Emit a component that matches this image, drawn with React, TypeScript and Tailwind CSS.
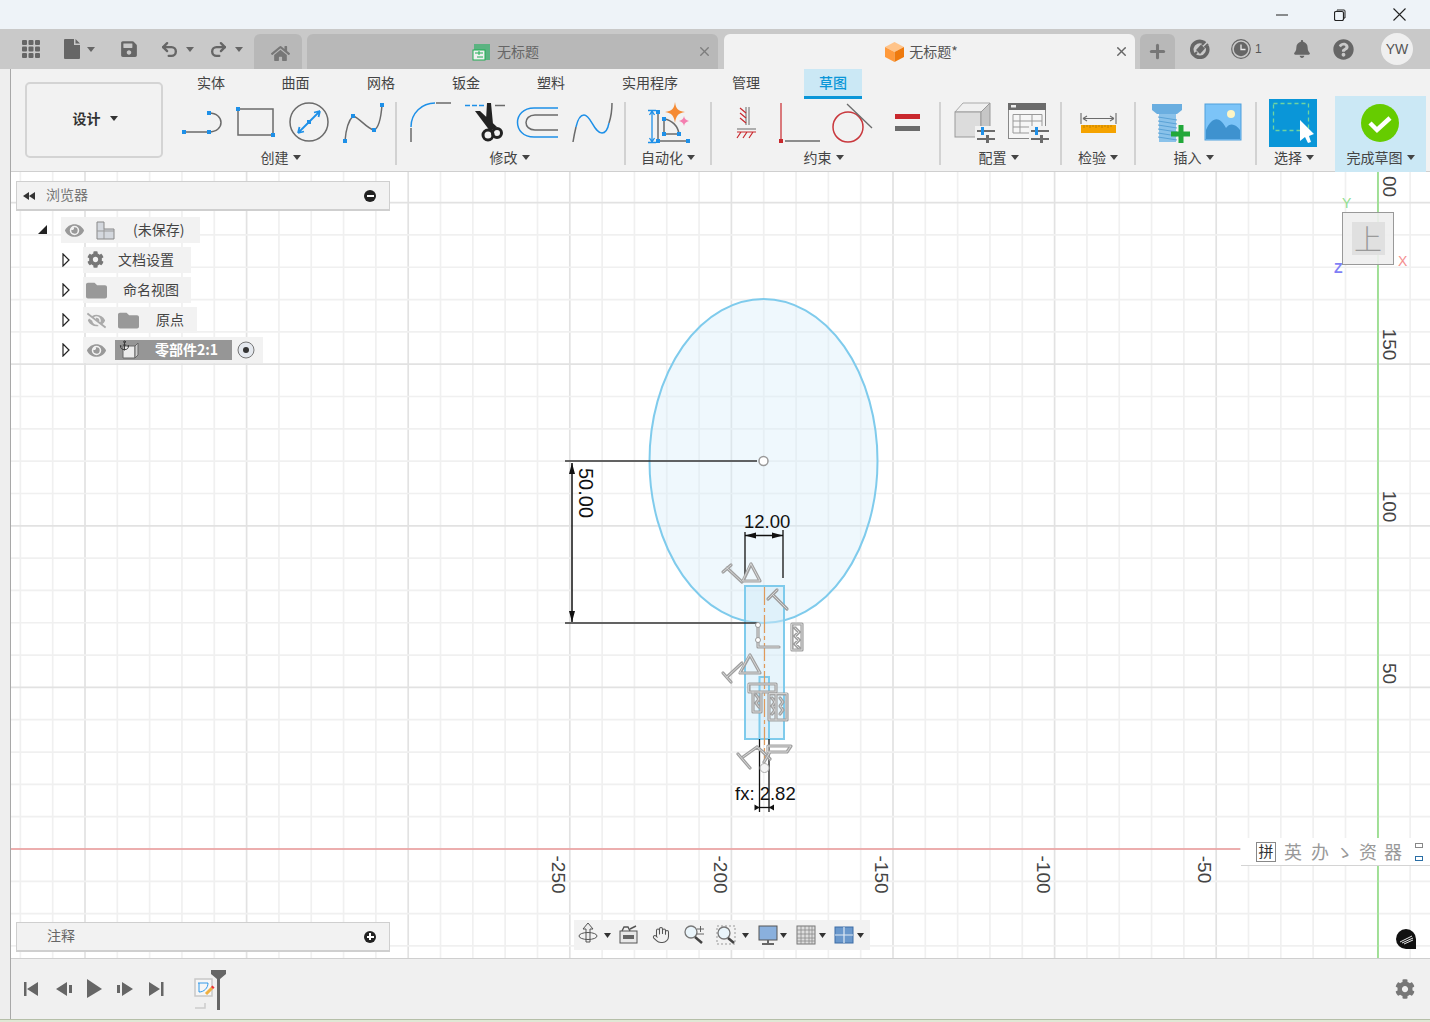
import React from "react";
import { FaHome, FaCog, FaBell, FaQuestionCircle, FaEye, FaEyeSlash, FaFolder, FaSave } from "react-icons/fa";
import { Undo2, Redo2, Plus, X, Hand, Anchor } from "lucide-react";

const BLUE = "#1e90e8";
const GR = "#6b6b6b";

function P({ x, y = 99, w, h = 48, children, className }: { x: number; y?: number; w: number; h?: number; children?: React.ReactNode; className?: string }) {
  return (
    <svg width={w} height={h} viewBox={`${x} ${y} ${w} ${h}`} className={"block shrink-0 " + (className ?? "")}>
      {children}
    </svg>
  );
}
const Sq = ({ x, y, c = BLUE, s = 4 }: { x: number; y: number; c?: string; s?: number }) => <rect x={x - s / 2} y={y - s / 2} width={s} height={s} fill={c} />;
const Caret = ({ c = "#444", cls = "" }: { c?: string; cls?: string }) => (
  <span className={"inline-block w-0 h-0 border-x-[4px] border-t-[5px] border-x-transparent shrink-0 " + cls} style={{ borderTopColor: c }} />
);

function Group({ w, label, children, pr = "pr-[6px]" }: { w: string; label: string; children: React.ReactNode; pr?: string }) {
  return (
    <div className={"flex flex-col shrink-0 " + w}>
      <div className="flex h-[48px]">{children}</div>
      <div className={"flex items-center justify-center h-[23px] gap-[4px] text-[14px] text-[#444] pb-[2px] " + pr}>
        <span>{label}</span>
        <Caret />
      </div>
    </div>
  );
}
const Sep = () => <div className="w-[2px] h-[63px] mt-[3px] -ml-[1px] mr-[1px] bg-[#d2d2d2] shrink-0" />;

function Sliders({ x }: { x: number }) {
  return (
    <g>
      <path d={`M${x} 131H${x + 18}M${x} 139H${x + 18}`} stroke={GR} strokeWidth="2" />
      <rect x={x + 4} y={127} width="3" height="8" fill={BLUE} />
      <rect x={x + 9} y={135} width="3" height="8" fill={GR} />
    </g>
  );
}

function Ribbon() {
  const tabs: [string, string][] = [
    ["实体", "w-[78px]"],
    ["曲面", "w-[91px]"],
    ["网格", "w-[80px]"],
    ["钣金", "w-[90px]"],
    ["塑料", "w-[80px]"],
    ["实用程序", "w-[118px]"],
    ["管理", "w-[74px]"],
  ];
  return (
    <div className="flex h-[103px] border-b border-[#cfcfcf] bg-[#f2f2f2]">
      <div className="w-[161px] shrink-0 pl-[14px] pt-[13px]">
        <div className="w-[138px] h-[76px] border-2 border-[#d4d4d4] rounded-[5px] flex items-center justify-center gap-[9px] text-[14px] font-bold text-[#333] pb-[3px] pl-[2px]">
          <span>设计</span>
          <Caret c="#333" />
        </div>
      </div>
      <div className="flex flex-col flex-1">
        <div className="flex h-[30px] text-[14px] text-[#444]">
          {tabs.map(([t, w]) => (
            <div key={t} className={"flex items-center justify-center h-[26px] " + w}>{t}</div>
          ))}
          <div className="ml-[21px] w-[58px] h-[30px] bg-[#cbe8f5] border-b-[3px] border-[#0a96d8] flex items-center justify-center text-[#0a96d8] font-medium">草图</div>
        </div>
        <div className="flex">
          <Group w="w-[224px]" label="创建" pr="pr-[7px]">
            <P x={172} w={56}>
              <path d="M184 132H209M209 113C225 113 225 132 209 132" fill="none" stroke={GR} strokeWidth="1.5" />
              <Sq x={184} y={132} /><Sq x={209} y={132} /><Sq x={209} y={113} />
            </P>
            <P x={228} w={54}>
              <rect x={238} y={109} width={35} height={26} fill="none" stroke={GR} strokeWidth="1.5" />
              <Sq x={238} y={109} /><Sq x={273} y={135} />
            </P>
            <P x={282} w={54}>
              <circle cx={309} cy={122} r={19} fill="none" stroke={GR} strokeWidth="1.5" />
              <path d="M298 133L320 111M298 133l6-1.5M298 133l1.5-6M320 111l-6 1.5M320 111l-1.5 6" fill="none" stroke={BLUE} strokeWidth="1.8" />
              <Sq x={309} y={122} />
            </P>
            <P x={336} w={60}>
              <path d="M345 141C346 128 349 120 353 116C360 118 366 128 374 130C379 128 381 118 382 105" fill="none" stroke={GR} strokeWidth="1.5" />
              <Sq x={345} y={141} /><Sq x={353} y={116} /><Sq x={374} y={130} /><Sq x={382} y={105} />
            </P>
          </Group>
          <Sep />
          <Group w="w-[227px]" label="修改" pr="pr-[4px]">
            <P x={398} w={60}>
              <path d="M411 127C411 113 422 103 435 103" fill="none" stroke={BLUE} strokeWidth="1.5" />
              <path d="M436 103H451M411 128V142" fill="none" stroke={GR} strokeWidth="1.5" />
            </P>
            <P x={458} w={56}>
              <path d="M465 105.500H485" stroke={BLUE} strokeWidth="1.5" strokeDasharray="5 2" />
              <path d="M495 105.500H505" stroke={GR} strokeWidth="1.5" />
              <path d="M487 103L491 103L493 124L490 129L486 120ZM475 111L480 111L497 127L490 131Z" fill="#222" />
              <circle cx={488} cy={135} r={5} fill="none" stroke="#222" strokeWidth="3" />
              <circle cx={497} cy={133} r={4.500} fill="none" stroke="#222" strokeWidth="3" />
            </P>
            <P x={514} w={54}>
              <path d="M558 108H534C512 108 512 137 534 137H558" fill="none" stroke={BLUE} strokeWidth="1.5" />
              <path d="M558 115H535C523 115 523 130 535 130H558" fill="none" stroke={GR} strokeWidth="1.5" />
            </P>
            <P x={568} w={57}>
              <path d="M573 142C574 136 575 131 576 127" fill="none" stroke={GR} strokeWidth="1.5" />
              <path d="M576 127C578 118 581 115 584 115C591 115 594 133 602 133C606 133 608 128 609 123" fill="none" stroke={BLUE} strokeWidth="1.5" />
              <path d="M609 123C611 117 612 110 612 103" fill="none" stroke={GR} strokeWidth="1.5" />
            </P>
          </Group>
          <Sep />
          <Group w="w-[84px]" label="自动化" pr="pr-[2px]">
            <P x={627} w={84}>
              <path d="M652 111V142M648 110.500H656M648 142.500H656M652 111l-2.500 4M652 111l2.500 4M652 142l-2.500-4M652 142l2.500-4" fill="none" stroke={BLUE} strokeWidth="1.3" />
              <path d="M658 112V141H688M664 119V134H679M664 119C672 120 678 126 679 134" fill="none" stroke={GR} strokeWidth="1.5" />
              <Sq x={658} y={112} /><Sq x={658} y={141} /><Sq x={664} y={119} /><Sq x={664} y={134} /><Sq x={679} y={134} /><Sq x={688} y={141} />
              <path d="M675 102C676 109 678 111 685 112C678 113 676 116 675 123C674 116 672 113 665 112C672 111 674 109 675 102Z" fill="#f58a33" />
              <path d="M684 116C684.500 119 686 120 689 121C686 122 684.500 123 684 126C683.500 123 682 122 679 121C682 120 683.500 119 684 116Z" fill="#f47fb0" />
            </P>
          </Group>
          <Sep />
          <Group w="w-[227px]" label="约束">
            <P x={713} w={50}>
              <path d="M746 107V125M749 107V125M737 129H756" fill="none" stroke={GR} strokeWidth="1" />
              <path d="M740 108L746 113M740 113L746 118M740 118L746 123M737 132H756M741 132L737 138M747 132L743 138M753 132L749 138" fill="none" stroke="#c9282d" strokeWidth="1.2" />
            </P>
            <P x={763} w={64}>
              <path d="M781 103V139" stroke="#c9282d" strokeWidth="1.2" />
              <path d="M785 141H820" stroke={GR} strokeWidth="1.5" />
              <Sq x={781} y={141} c="#c9282d" />
            </P>
            <P x={827} w={58}>
              <circle cx={848} cy={127} r={15} fill="none" stroke="#c9383d" strokeWidth="1.5" />
              <path d="M847 104L872 128" stroke={GR} strokeWidth="1.3" />
            </P>
            <P x={885} w={55}>
              <rect x={895} y={114} width={25} height={5} fill="#c9282d" />
              <rect x={895} y={126} width={25} height={5} fill={GR} />
            </P>
          </Group>
          <Sep />
          <Group w="w-[119px]" label="配置">
            <P x={942} w={58}>
              <path d="M955 112L963 103H990L981 112Z" fill="#f0f0f0" stroke="#aaa" />
              <rect x={955} y={112} width={26} height={25} fill="#dcdcdc" stroke="#999" />
              <path d="M981 112L990 103V128L981 137Z" fill="#c6c6c6" stroke="#999" />
              <rect x={975} y={126} width={22} height={17} fill="#f2f2f2" />
              <Sliders x={977} />
            </P>
            <P x={1000} w={61}>
              <rect x={1008.500} y={103.500} width={37} height={35} fill="#f6f6f6" stroke="#888" />
              <rect x={1008} y={103} width={38} height={7} fill={GR} />
              <rect x={1011} y={105} width={5} height={2.500} fill="#eee" />
              <path d="M1013 114.500H1042M1013 121H1042M1013 127H1032M1013 133H1032M1013 114.500V133M1020 114.500V133M1032 114.500V133M1042 114.500V127" stroke="#999" fill="none" />
              <rect x={1029} y={126} width={22} height={17} fill="#f2f2f2" />
              <Sliders x={1031} />
            </P>
          </Group>
          <Sep />
          <Group w="w-[72px]" label="检验" pr="pr-[2px]">
            <P x={1063} w={72}>
              <path d="M1081 113V124M1116 113V124M1083 118.500H1114M1083 118.500l4-2.500M1083 118.500l4 2.500M1114 118.500l-4-2.500M1114 118.500l-4 2.500" fill="none" stroke={GR} strokeWidth="1.1" />
              <rect x={1081} y={125} width={35} height={8} fill="#f5a300" />
              <path d="M1084 125v3M1087 125v2M1090 125v3M1093 125v2M1096 125v3M1099 125v2M1102 125v3M1105 125v2M1108 125v3M1111 125v2" stroke="#b87a00" strokeWidth="0.8" />
            </P>
          </Group>
          <Sep />
          <Group w="w-[119px]" label="插入">
            <P x={1137} w={62}>
              <path d="M1152 104H1182V110L1177 114H1157L1152 110Z" fill="#6aaee0" />
              <rect x={1159} y={114} width={17} height={28} fill="#8ac2ea" />
              <path d="M1158 117L1177 120M1158 121L1177 124M1158 125L1177 128M1158 129L1177 132M1158 133L1177 136M1158 137L1177 140" stroke="#5aa2d6" strokeWidth="1" />
              <path d="M1171 134H1190M1181 125V143" stroke="#22a83a" strokeWidth="5" />
            </P>
            <P x={1199} w={57}>
              <rect x={1205} y={104} width={36} height={36} fill="#7cc4f8" stroke="#4f9fdc" />
              <path d="M1206 130C1212 116 1220 116 1226 128C1230 122 1236 124 1240 130V139H1206Z" fill="#3e92cf" />
              <circle cx={1231} cy={114} r={4} fill="#fdf5c5" />
            </P>
          </Group>
          <Sep />
          <Group w="w-[77px]" label="选择" pr="pr-[5px]">
            <P x={1258} w={77}>
              <rect x={1269} y={99} width={48} height={48} fill="#0a96d8" />
              <rect x={1273.500} y={103.500} width={35} height={27} fill="none" stroke="#6fd4a0" strokeWidth="1.3" strokeDasharray="4 3" />
              <path d="M1300 120L1300 141L1305 137L1308 143L1311 142L1309 136L1314 134Z" fill="#fff" />
            </P>
          </Group>
          <div className="flex flex-col w-[91px] h-[76px] -mt-[3px] bg-[#cbe8f5] shrink-0">
            <div className="flex h-[51px] pt-[3px]">
              <P x={1335} w={91}>
                <circle cx={1380} cy={123} r={19} fill="#66cc00" />
                <path d="M1370 123L1377 130L1390 118" fill="none" stroke="#fff" strokeWidth="4.500" />
              </P>
            </div>
            <div className="flex items-center justify-center h-[23px] gap-[4px] text-[14px] text-[#444] pb-[2px]">
              <span>完成草图</span>
              <Caret />
            </div>
          </div>
        </div>
      </div>
    </div>
  );
}

function TabBar() {
  return (
    <div className="flex h-[40px] bg-[#c9c9c9] items-end shrink-0">
      <div className="w-[254px] h-full flex items-center pl-[22px] shrink-0 text-[#666]">
        <svg width="18" height="18" viewBox="0 0 18 18" className="shrink-0">
          {[0, 6.500, 13].flatMap((x) => [0, 6.500, 13].map((y) => <rect key={`${x}-${y}`} x={x} y={y} width="5" height="5" rx="1" fill="#666" />))}
        </svg>
        <svg width="16" height="20" viewBox="0 0 16 20" className="ml-[24px] shrink-0"><path d="M1 0H10V6H16V19a1 1 0 0 1-1 1H1a1 1 0 0 1-1-1V1a1 1 0 0 1 1-1ZM11.500 0L16 4.500H11.500Z" fill="#666" /></svg>
        <Caret c="#666" cls="ml-[7px]" />
        <FaSave size={18} className="ml-[25px] shrink-0" />
        <Undo2 size={19} strokeWidth={3} className="ml-[22px] shrink-0" />
        <Caret c="#666" cls="ml-[7px]" />
        <Redo2 size={19} strokeWidth={3} className="ml-[15px] shrink-0" />
        <Caret c="#666" cls="ml-[7px]" />
      </div>
      <div className="w-[48px] h-[35px] rounded-t-[6px] bg-[#b8b8b8] flex items-center justify-center shrink-0 text-[#777] pt-[3px] pl-[4px]"><FaHome size={19} /></div>
      <div className="relative ml-[5px] w-[411px] h-[35px] rounded-t-[6px] bg-[#b8b8b8] flex items-center justify-center gap-[6px] shrink-0 text-[14px] text-[#666] pr-[14px]">
        <svg width="19" height="19" viewBox="0 0 19 19"><rect x="2" y="2" width="16" height="16" fill="#5bb381" /><rect x="1" y="8" width="12" height="10" fill="#f0f0f0" stroke="#1fae52" /><path d="M3 11H11M7 9V13M5 15H11" stroke="#1fae52" /></svg>
        <span>无标题</span>
        <X size={15} strokeWidth={2.2} className="absolute right-[6px] top-[10px] text-[#7d7d7d]" />
      </div>
      <div className="relative ml-[6px] w-[411px] h-[35px] rounded-t-[6px] bg-[#f2f2f2] flex items-center justify-center gap-[5px] shrink-0 text-[14px] text-[#555] pr-[16px]">
        <svg width="19" height="20" viewBox="0 0 19 20"><path d="M9.500 0L19 5L9.500 10L0 5Z" fill="#ffc48a" /><path d="M0 5L9.500 10V20L0 15Z" fill="#ff9a3c" /><path d="M19 5L9.500 10V20L19 15Z" fill="#ee7a0e" /></svg>
        <span>无标题*</span>
        <X size={15} strokeWidth={2.2} className="absolute right-[6px] top-[10px] text-[#666]" />
      </div>
      <div className="ml-[5px] w-[35px] h-[35px] rounded-t-[6px] bg-[#b8b8b8] flex items-center justify-center shrink-0 text-[#777]"><Plus size={21} strokeWidth={3.500} /></div>
      <div className="h-full flex items-center flex-1 text-[#666]">
        <svg width="20" height="20" viewBox="0 0 20 20" className="ml-[15px] shrink-0">
          <path d="M14 3.600A8 8 0 1 0 17 7" fill="none" stroke="#666" strokeWidth="3.600" />
          <path d="M6 11L11 5.500L15 9.500L10 15Z" fill="#666" />
          <path d="M12 6L15.500 2.500M14.500 8.500L18 5M7 13L4.500 15.500" stroke="#666" strokeWidth="2" />
        </svg>
        <svg width="20" height="20" viewBox="0 0 20 20" className="ml-[21px] shrink-0"><circle cx="10" cy="10" r="9.300" fill="none" stroke="#666" strokeWidth="1.200" /><circle cx="10" cy="10" r="7.200" fill="#666" /><path d="M10 5.500V10.500H14.500" fill="none" stroke="#e8e8e8" strokeWidth="1.300" /></svg>
        <span className="ml-[4px] w-[38px] text-[12px] text-[#555] font-['Liberation_Sans',sans-serif]">1</span>
        <FaBell size={18} className="shrink-0" />
        <FaQuestionCircle size={21} className="ml-[22px] shrink-0" />
        <div className="ml-[27px] w-[32px] h-[32px] rounded-full bg-[#efefef] flex items-center justify-center text-[14px] text-[#555] font-['Liberation_Sans',sans-serif] shrink-0">YW</div>
      </div>
    </div>
  );
}

const Chip = ({ children, w }: { children: React.ReactNode; w: string }) => (
  <div className={"h-[26px] bg-[#f2f2f2] flex items-center text-[14px] text-[#444] shrink-0 " + w}>{children}</div>
);
const Tri = () => (
  <svg width="8" height="14" viewBox="0 0 8 14" className="shrink-0"><path d="M1 1L7 7L1 13Z" fill="#fff" stroke="#222" strokeWidth="1.200" /></svg>
);

function Browser() {
  return (
    <div className="absolute left-[5px] top-[9px] w-[374px] font-['Noto_Sans_CJK_SC',sans-serif]">
      <div className="h-[30px] bg-[#f2f2f2] border border-[#cfcfcf] border-b-2 flex items-center text-[14px] text-[#777] pl-[6px] pr-[13px]">
        <svg width="12" height="8" viewBox="0 0 12 8" className="shrink-0"><path d="M0 4L6 0V8ZM6 4L12 0V8Z" fill="#333" /></svg>
        <span className="ml-[11px] pb-[2px]">浏览器</span>
        <span className="ml-auto w-[12px] h-[12px] rounded-full bg-[#222] flex items-center justify-center"><span className="w-[7px] h-[2px] bg-white" /></span>
      </div>
      <div className="flex flex-col gap-[4px] mt-[6px]">
        <div className="flex items-center ml-[22px]">
          <svg width="10" height="10" viewBox="0 0 10 10" className="shrink-0"><path d="M0 9L9 0V9Z" fill="#222" /></svg>
          <div className="w-[13px]" />
          <Chip w="w-[139px]">
            <FaEye size={19} className="ml-[4px] text-[#999] shrink-0" />
            <svg width="20" height="20" viewBox="0 0 20 20" className="ml-[12px] shrink-0"><path d="M1 2H8V9H18V19H1Z" fill="#d4d8de" stroke="#888" /><path d="M8 9V19M1 11H18" stroke="#999" /></svg>
            <span className="ml-[17px] pb-[2px]">(未保存)</span>
          </Chip>
        </div>
        <div className="flex items-center ml-[46px]">
          <Tri />
          <div className="w-[13px]" />
          <Chip w="w-[108px]">
            <FaCog size={17} className="ml-[4px] -mt-[2px] text-[#777] shrink-0" />
            <span className="ml-[14px] pb-[2px]">文档设置</span>
          </Chip>
        </div>
        <div className="flex items-center ml-[46px]">
          <Tri />
          <div className="w-[13px]" />
          <Chip w="w-[108px]">
            <FaFolder size={21} className="ml-[3px] text-[#999] shrink-0" />
            <span className="ml-[16px] pb-[2px]">命名视图</span>
          </Chip>
        </div>
        <div className="flex items-center ml-[46px]">
          <Tri />
          <div className="w-[13px]" />
          <Chip w="w-[114px]">
            <FaEyeSlash size={19} className="ml-[4px] text-[#aaa] shrink-0" />
            <FaFolder size={21} className="ml-[12px] text-[#999] shrink-0" />
            <span className="ml-[17px] pb-[2px]">原点</span>
          </Chip>
        </div>
        <div className="flex items-center ml-[46px]">
          <Tri />
          <div className="w-[13px]" />
          <Chip w="w-[180px]">
            <FaEye size={19} className="ml-[4px] text-[#999] shrink-0" />
            <div className="ml-[9px] w-[117px] h-[20px] bg-[#969696] flex items-center text-white font-bold shrink-0 relative">
              <svg width="18" height="18" viewBox="0 0 18 18" className="ml-[6px] shrink-0"><path d="M2 5H14V17H2Z" fill="#ececec" stroke="#666" /><path d="M14 5L17 2V14L14 17Z" fill="#cfcfcf" stroke="#666" /></svg>
              <Anchor size={11} className="absolute left-[4px] top-[0px] text-[#333]" />
              <span className="ml-[16px] pb-[2px]">零部件2:1</span>
            </div>
            <svg width="18" height="18" viewBox="0 0 18 18" className="ml-[5px] shrink-0"><circle cx="9" cy="9" r="8" fill="#e4e8ee" stroke="#777" /><circle cx="9" cy="9" r="3" fill="#333" /></svg>
          </Chip>
        </div>
      </div>
    </div>
  );
}

const G = ({ d }: { d: string }) => (
  <g fill="none" strokeLinecap="round" strokeLinejoin="round">
    <path d={d} stroke="#a0a0a0" strokeWidth="3.200" />
    <path d={d} stroke="#dcdcdc" strokeWidth="0.900" />
  </g>
);

function Sketch() {
  const xs = Array.from({ length: 45 }, (_, i) => 85 - 64.640 + i * 32.320);
  const ys = Array.from({ length: 26 }, (_, i) => 849 + 129.280 - i * 32.320);
  const LINE = "#7fcbec";
  return (
    <svg className="absolute inset-0" width={1419} height={786} viewBox="11 172 1419 786">
      {xs.map((x, i) => {
        const major = (i - 2) % 5 === 0;
        return <line key={"x" + i} x1={x} x2={x} y1={172} y2={958} stroke={major ? "#e2e2e2" : "#f0f0f0"} strokeWidth="1.700" />;
      })}
      {ys.map((y, i) => {
        const major = (i - 4) % 5 === 0;
        return <line key={"y" + i} x1={11} x2={1430} y1={y} y2={y} stroke={major ? "#e2e2e2" : "#f0f0f0"} strokeWidth="1.700" />;
      })}
      <line x1={11} x2={1240} y1={849} y2={849} stroke="#ec9a9a" strokeWidth="1.300" />
      <line x1={1378} x2={1378} y1={172} y2={958} stroke="#7ddc6e" strokeWidth="1.300" />

      <ellipse cx={763.500} cy={461} rx={114} ry={162} fill="#d6edf9" fillOpacity="0.4" stroke={LINE} strokeWidth="2" />
      <rect x={745} y={586} width={39} height={153} fill="#cfe9f7" fillOpacity="0.5" stroke={LINE} strokeWidth="2" />
      <rect x={759.500} y={677} width={9.500} height={62} fill="#cfe9f7" fillOpacity="0.4" stroke={LINE} strokeWidth="2" />
      <path d="M764.500 587V768" stroke="#e09a5a" strokeWidth="1.200" strokeDasharray="18 3 4 3" />

      <path d="M565 461H757M565 623H758" stroke="#333" strokeWidth="1.500" />
      <path d="M572 463V622" stroke="#111" strokeWidth="1.500" />
      <path d="M572 463l-3 11h6ZM572 622l-3-11h6Z" fill="#111" />
      <circle cx={763.500} cy={461} r={4.500} fill="#fff" stroke="#999" strokeWidth="1.500" />

      <path d="M745 532V578M783 530V578" stroke="#111" strokeWidth="1.300" />
      <path d="M745 535.500H783" stroke="#111" strokeWidth="1.300" />
      <path d="M745 535.500l11-3v6ZM783 535.500l-11-3v6Z" fill="#111" />

      <path d="M759.500 739V812M769 739V812" stroke="#111" strokeWidth="1.300" />
      <path d="M755 807.500H773" stroke="#111" strokeWidth="1.300" />
      <path d="M759.500 807.500l-5-3v6ZM769 807.500l5-3v6Z" fill="#111" />

      <G d="M723 572L731 565M727 568L742 582" />
      <G d="M743 581H760L751 564Z" />
      <G d="M768 599L777 590M773 595L787 609" />
      <G d="M758 625V647H779" />
      <circle cx={758} cy={625} r={2.500} fill="#fff" stroke="#999" />
      <circle cx={758} cy={640} r={2.500} fill="#fff" stroke="#999" />
      <G d="M792 624H802V650H792ZM795 628L799 632L795 636L799 640L795 644L799 648" />
      <G d="M740 673H760L750 655Z" />
      <G d="M723 673L731 682M727 677L742 663" />
      <G d="M749 684H776V692H749ZM753 692V712H761V692M756 695L759 699L756 703L759 707" />
      <G d="M769 694V720H787V694ZM776 694V720M772 698L775 702L772 706L775 710L772 714M780 698L783 702L780 706L783 710L780 714" />
      <G d="M738 754L750 768M743 757L757 747M757 747L763 752M763 752L770 759" />
      <G d="M768 746H791L787 752H768ZM770 752L764 762" />
      <circle cx={764.500} cy={768} r={4.500} fill="#f4f4f4" stroke="#aaa" />
    </svg>
  );
}

const Num = ({ t, cls }: { t: string; cls: string }) => (
  <div className={"absolute rotate-90 text-[19px] leading-none text-[#444] font-['Liberation_Sans',sans-serif] origin-center whitespace-nowrap " + cls}>{t}</div>
);

function Canvas() {
  return (
    <div className="relative flex-1 bg-white overflow-hidden">
      <Sketch />
      <Num t="-250" cls="left-[528px] top-[693px]" />
      <Num t="-200" cls="left-[690px] top-[693px]" />
      <Num t="-150" cls="left-[851px] top-[693px]" />
      <Num t="-100" cls="left-[1013px] top-[693px]" />
      <Num t="-50" cls="left-[1180px] top-[688px]" />
      <Num t="50" cls="left-[1368px] top-[492px]" />
      <Num t="100" cls="left-[1363px] top-[325px]" />
      <Num t="150" cls="left-[1363px] top-[163px]" />
      <Num t="00" cls="left-[1368px] top-[5px]" />

      <div className="absolute left-[550px] top-[311px] rotate-90 text-[20px] leading-none text-[#111] font-['Liberation_Sans',sans-serif] whitespace-nowrap origin-center">50.00</div>
      <div className="absolute left-[733px] top-[340px] text-[18.500px] leading-5 text-[#111] font-['Liberation_Sans',sans-serif]">12.00</div>
      <div className="absolute left-[724px] top-[612px] text-[18.500px] leading-5 text-[#111] font-['Liberation_Sans',sans-serif]">fx: 2.82</div>

      <div className="absolute left-[1331px] top-[40px] w-[52px] h-[53px] bg-[#eeeeee]/90 border border-[#999] flex items-center justify-center">
        <div className="w-[33px] h-[33px] bg-[#e0e0e0] flex items-center justify-center text-[28px] leading-[33px] font-light text-[#9a9a9a]">上</div>
      </div>
      <div className="absolute left-[1331px] top-[25px] text-[14px] leading-3 text-[#8fe08f] font-['Liberation_Sans',sans-serif]">Y</div>
      <div className="absolute left-[1323px] top-[90px] text-[14px] leading-3 font-bold text-[#7f7ff5] font-['Liberation_Sans',sans-serif]">Z</div>
      <div className="absolute left-[1387px] top-[83px] text-[14px] leading-3 text-[#f58f8f] font-['Liberation_Sans',sans-serif]">X</div>

      <Browser />

      <div className="absolute left-[5px] top-[750px] w-[374px] h-[30px] bg-[#f2f2f2] border border-[#cfcfcf] border-b-2 flex items-center text-[14px] text-[#666] pl-[30px] pr-[13px]">
        <span className="pb-[2px]">注释</span>
        <span className="ml-auto w-[12px] h-[12px] rounded-full bg-[#222] relative flex items-center justify-center">
          <span className="w-[7px] h-[2px] bg-white" />
          <span className="absolute w-[2px] h-[7px] bg-white" />
        </span>
      </div>

      <div className="absolute left-[563px] top-[748px] w-[296px] h-[30px] bg-[#f2f2f2] flex items-center">
        <P x={574} y={920} w={296} h={30}>
          <path d="M588 923L583 929H586V942H590V929H593Z" fill="#eee" stroke="#555" />
          <ellipse cx={588} cy={936} rx={9} ry={3.500} fill="none" stroke="#555" />
          <path d="M604 933H611L607.500 938Z" fill="#333" />
          <rect x={620} y={931} width={17} height={12} fill="#e8e8e8" stroke="#555" />
          <rect x={623} y={935} width={11} height={4} fill="#666" />
          <path d="M622 931L624 927H628L630 931M630 929L636 926" fill="none" stroke="#555" strokeWidth="1.400" />
          <g transform="translate(652 926)"><Hand size={18} color="#555" strokeWidth={1.400} /></g>
          <circle cx={691} cy={932} r={6} fill="#eaf5fb" stroke="#777" strokeWidth="1.300" />
          <path d="M695 937L702 943" stroke="#444" strokeWidth="2.500" />
          <path d="M697 929H704M700.500 926V932M697 934H704" stroke="#555" strokeWidth="0.900" />
          <rect x={717} y={926} width={18} height={18} fill="none" stroke="#999" strokeDasharray="2 2" />
          <circle cx={724} cy={933} r={6} fill="#eaf5fb" stroke="#777" strokeWidth="1.300" />
          <path d="M728 938L734 943" stroke="#444" strokeWidth="2.500" />
          <path d="M742 933H749L745.500 938Z" fill="#333" />
          <rect x={759} y={926} width={18} height={14} fill="#8ab0dd" stroke="#555" />
          <path d="M768 940V943M762 944H774" stroke="#666" strokeWidth="2" />
          <path d="M780 933H787L783.500 938Z" fill="#333" />
          <rect x={797} y={926} width={18} height={18} fill="#ddd" stroke="#777" />
          <path d="M797 930H815M797 934H815M797 938H815M797 941H815M801 926V944M805 926V944M809 926V944M812 926V944" stroke="#8a8a8a" strokeWidth="0.800" />
          <path d="M819 933H826L822.500 938Z" fill="#333" />
          <rect x={835} y={927} width={18} height={16} fill="#6a98cc" stroke="#3d6da5" />
          <path d="M844 927V943M835 935H853" stroke="#dfe9f4" strokeWidth="1.200" />
          <path d="M857 933H864L860.500 938Z" fill="#333" />
        </P>
      </div>

      <div className="absolute left-[1230px] top-[666px] w-[189px] h-[28px] bg-white border-b border-[#d4d4d4] flex items-center text-[18px] text-[#999] pl-[15px]">
        <div className="w-[20px] h-[20px] border border-[#888] flex items-center justify-center text-[15px] text-[#333] shrink-0">拼</div>
        <span className="ml-[8px] w-[22px]">英</span>
        <span className="ml-[5px] w-[22px]">办</span>
        <span className="ml-[2px] w-[22px]">ゝ</span>
        <span className="ml-[2px] w-[22px]">资</span>
        <span className="ml-[3px] w-[22px]">器</span>
        <span className="ml-[9px] flex flex-col gap-[8px]"><span className="w-[8px] h-[5px] border border-[#888]" /><span className="w-[8px] h-[5px] border border-[#2a6ea5]" /></span>
      </div>

      <svg width="22" height="22" viewBox="0 0 22 22" className="absolute left-[1384px] top-[756px]">
        <path d="M11 1A10 10 0 1 0 11 21H21V11A10 10 0 0 0 11 1Z" fill="#111" />
        <path d="M5 14L17 8M7 15L18 10M9 16L18 12" stroke="#fff" strokeWidth="0.900" />
      </svg>
    </div>
  );
}

function Timeline() {
  return (
    <div className="h-[61px] bg-[#f0f0f0] border-t border-[#cfcfcf] flex items-center shrink-0 pr-[15px]">
      <P x={11} y={959} w={180} h={60}>
        <path d="M24 982H26.500V996H24ZM38 982V996L27 989Z" fill="#666" />
        <path d="M56 989L67 982V996ZM69 985H72V993H69Z" fill="#666" />
        <path d="M87 979L102 989L87 998Z" fill="#666" />
        <path d="M117 985H120V993H117ZM122 982L133 989L122 996Z" fill="#666" />
        <path d="M149 982L160 989L149 996ZM161 982H163.500V996H161Z" fill="#666" />
      </P>
      <P x={191} y={959} w={40} h={60}>
        <rect x={195} y={979} width={17} height={17} fill="#f6f6f6" stroke="#c8c8c8" strokeWidth="1.500" />
        <path d="M198 983H208M199 983V992M199 992C204 992 208 988 208 983" fill="none" stroke={BLUE} strokeWidth="0.900" />
        <path d="M206 994L212 988" stroke="#f0b040" strokeWidth="3" />
        <path d="M212 988L213.500 986.500" stroke="#e33" strokeWidth="3" />
        <path d="M204 1008H205V1003M195 1008H205" fill="none" stroke="#ccc" strokeWidth="1.500" />
        <path d="M211 970H226V974L220 979V1010H217V979L211 974Z" fill="#666" />
      </P>
      <FaCog size={20} className="ml-auto text-[#777]" />
    </div>
  );
}

export default function App() {
  return (
    <div className="w-[1430px] h-[1022px] flex flex-col overflow-hidden bg-[#f0f0f0] font-['Noto_Sans_CJK_SC',sans-serif]">
      <div className="h-[29px] bg-[#eef3f8] flex items-center justify-end shrink-0">
        <svg width="12" height="2" viewBox="0 0 12 2" className="mr-[46px]"><path d="M0 1H12" stroke="#222" strokeWidth="1" /></svg>
        <svg width="12" height="12" viewBox="0 0 12 12" className="mr-[47px]"><path d="M3 1.500V1H10a1 1 0 0 1 1 1V9H10" fill="none" stroke="#222" /><rect x="0.500" y="2.500" width="9" height="9" rx="1.500" fill="none" stroke="#222" strokeWidth="1.200" /></svg>
        <svg width="13" height="13" viewBox="0 0 13 13" className="mr-[24px]"><path d="M0.500 0.500L12.500 12.500M12.500 0.500L0.500 12.500" stroke="#222" strokeWidth="1.100" /></svg>
      </div>
      <TabBar />
      <div className="flex flex-1 min-h-0">
        <div className="w-[11px] shrink-0 bg-[#eeeeee] border-r border-[#a8a8a8]" />
        <div className="flex flex-col flex-1 min-w-0">
          <Ribbon />
          <Canvas />
          <Timeline />
        </div>
      </div>
      <div className="h-[3px] bg-[#dfe8d5] border-t border-[#b5bfa8] shrink-0" />
    </div>
  );
}
